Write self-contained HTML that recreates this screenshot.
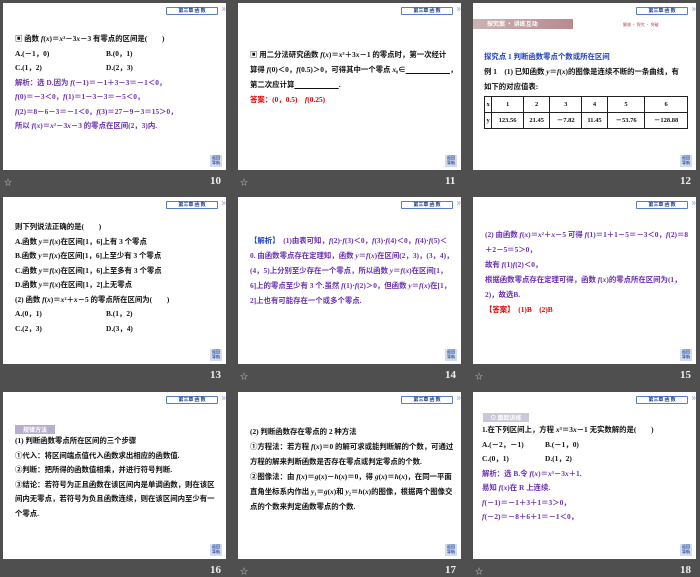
<!DOCTYPE html>
<html><head><meta charset="utf-8"><style>
*{margin:0;padding:0;box-sizing:border-box}
body{width:700px;height:577px;background:#4f4f4f;position:relative;overflow:hidden;font-family:"Liberation Serif","Noto Serif CJK SC","Noto Sans CJK SC",serif}
.s{position:absolute;width:223px;height:167px;background:#fff;overflow:hidden}
.tag{position:absolute;left:163px;top:4px;width:52px;height:8px;border:1px solid #5a7fc0;border-radius:1px;font-size:5px;line-height:6px;color:#1b3a8c;text-align:center;font-weight:bold;font-family:"Noto Sans CJK SC",sans-serif}
.tag:after{content:"»";position:absolute;right:-9px;top:-3px;font-size:10px;color:#8aa2d6;font-weight:normal}
.nav{position:absolute;left:207px;top:152px;width:12px;height:12px;background:#d3dcec;font-size:4px;line-height:5px;color:#2a4ea0;text-align:center;padding-top:1px;font-family:"Noto Sans CJK SC",sans-serif;font-weight:bold}
.c{position:absolute;left:12px;top:31px;right:10px;font-size:7.4px;line-height:14.5px;font-weight:bold;color:#111;font-family:"Liberation Serif","Noto Sans CJK SC",serif;white-space:nowrap}
.p{color:#6b2fb0}
.r{color:#e00000}
.b{color:#2040c0}
.cap{position:absolute;color:#eee;font-size:11px;font-weight:bold;font-family:"Liberation Serif",serif}
.st{position:absolute;color:#ccc;font-size:8px}
.two span{display:inline-block;width:91px}
table{border-collapse:collapse;font-size:6.5px;margin-top:2px;width:204px}
td{border:1px solid #222;text-align:center;height:12px}
</style></head><body>

<!-- slide 10 -->
<div class="s" style="left:3px;top:3px">
<div class="tag">第三章 函 数</div>
<div class="c" style="top:29px">▣ 函数 <i>f</i>(<i>x</i>)＝<i>x</i>²－3<i>x</i>－3 有零点的区间是(　　)<br>
<div class="two"><span>A.(－1，0)</span><span>B.(0，1)</span></div>
<div class="two"><span>C.(1，2)</span><span>D.(2，3)</span></div>
<div class="p">解析：选 D.因为 <i>f</i>(－1)＝－1＋3－3＝－1＜0，<br><i>f</i>(0)＝－3＜0，<i>f</i>(1)＝1－3－3＝－5＜0，<br><i>f</i>(2)＝8－6－3＝－1＜0，<i>f</i>(3)＝27－9－3＝15＞0，<br>所以 <i>f</i>(<i>x</i>)＝<i>x</i>²－3<i>x</i>－3 的零点在区间(2，3)内.</div></div>
<div class="nav">返回<br>导航</div></div>
<div class="st" style="left:4px;top:177px">☆</div><div class="cap" style="left:210px;top:175px">10</div>

<!-- slide 11 -->
<div class="s" style="left:238px;top:3px">
<div class="tag">第三章 函 数</div>
<div class="c" style="top:44px;line-height:15px">▣ 用二分法研究函数 <i>f</i>(<i>x</i>)＝<i>x</i>³＋3<i>x</i>－1 的零点时，第一次经计<br>算得 <i>f</i>(0)＜0，<i>f</i>(0.5)＞0，可得其中一个零点 <i>x</i>₀∈<u>　　　　　　</u>，<br>第二次应计算<u>　　　　　　</u>.<br><span class="r">答案：(0，0.5)　<i>f</i>(0.25)</span></div>
<div class="nav">返回<br>导航</div></div>
<div class="st" style="left:240px;top:177px">☆</div><div class="cap" style="left:445px;top:175px">11</div>

<!-- slide 12 -->
<div class="s" style="left:473px;top:3px">
<div class="tag">第三章 函 数</div>
<div style="position:absolute;left:0;top:16px;width:100px;height:10px;background:linear-gradient(90deg,#c9b3b5,#b88a90);color:#fff;font-size:6px;line-height:10px;padding-left:14px;font-weight:bold;font-family:'Noto Sans CJK SC',sans-serif">探究案 · 讲练互动</div>
<div style="position:absolute;left:150px;top:19px;font-size:4px;color:#b04050;font-family:'Noto Sans CJK SC',sans-serif">解惑 · 探究 · 突破</div>
<div class="c" style="top:46px;line-height:15px;left:11px"><span class="b">探究点 1 判断函数零点个数或所在区间</span><br>例 1　(1) 已知函数 <i>y</i>＝<i>f</i>(<i>x</i>)的图像是连续不断的一条曲线，有<br>如下的对应值表:
<table><tr><td>x</td><td>1</td><td>2</td><td>3</td><td>4</td><td>5</td><td>6</td></tr><tr><td>y</td><td>123.56</td><td>21.45</td><td>－7.82</td><td>11.45</td><td>－53.76</td><td>－128.88</td></tr></table></div>
<div class="nav">返回<br>导航</div></div>
<div class="cap" style="left:680px;top:175px">12</div>

<!-- slide 13 -->
<div class="s" style="left:3px;top:197px">
<div class="tag">第三章 函 数</div>
<div class="c" style="top:23px">则下列说法正确的是(　　)<br>A.函数 <i>y</i>＝<i>f</i>(<i>x</i>)在区间[1，6]上有 3 个零点<br>B.函数 <i>y</i>＝<i>f</i>(<i>x</i>)在区间[1，6]上至少有 3 个零点<br>C.函数 <i>y</i>＝<i>f</i>(<i>x</i>)在区间[1，6]上至多有 3 个零点<br>D.函数 <i>y</i>＝<i>f</i>(<i>x</i>)在区间[1，2]上无零点<br>(2) 函数 <i>f</i>(<i>x</i>)＝<i>x</i>²＋<i>x</i>－5 的零点所在区间为(　　)
<div class="two"><span>A.(0，1)</span><span>B.(1，2)</span></div>
<div class="two"><span>C.(2，3)</span><span>D.(3，4)</span></div></div>
<div class="nav">返回<br>导航</div></div>
<div class="cap" style="left:210px;top:369px">13</div>

<!-- slide 14 -->
<div class="s" style="left:238px;top:197px">
<div class="tag">第三章 函 数</div>
<div class="c p" style="top:36px;line-height:15px"><span class="b">【解析】</span>　(1)由表可知，<i>f</i>(2)·<i>f</i>(3)＜0，<i>f</i>(3)·<i>f</i>(4)＜0，<i>f</i>(4)·<i>f</i>(5)＜<br>0. 由函数零点存在定理知，函数 <i>y</i>＝<i>f</i>(<i>x</i>)在区间(2，3)，(3，4)，<br>(4，5)上分别至少存在一个零点，所以函数 <i>y</i>＝<i>f</i>(<i>x</i>)在区间[1，<br>6]上的零点至少有 3 个.虽然 <i>f</i>(1)·<i>f</i>(2)＞0，但函数 <i>y</i>＝<i>f</i>(<i>x</i>)在[1，<br>2]上也有可能存在一个或多个零点.</div>
<div class="nav">返回<br>导航</div></div>
<div class="st" style="left:240px;top:371px">☆</div><div class="cap" style="left:445px;top:369px">14</div>

<!-- slide 15 -->
<div class="s" style="left:473px;top:197px">
<div class="tag">第三章 函 数</div>
<div class="c p" style="top:30px;line-height:15px">(2) 由函数 <i>f</i>(<i>x</i>)＝<i>x</i>²＋<i>x</i>－5 可得 <i>f</i>(1)＝1＋1－5＝－3＜0，<i>f</i>(2)＝8<br>＋2－5＝5＞0，<br>故有 <i>f</i>(1)<i>f</i>(2)＜0，<br>根据函数零点存在定理可得，函数 <i>f</i>(<i>x</i>)的零点所在区间为(1，<br>2)，故选B.<br><span class="r">【答案】　(1)B　(2)B</span></div>
<div class="nav">返回<br>导航</div></div>
<div class="st" style="left:475px;top:371px">☆</div><div class="cap" style="left:680px;top:369px">15</div>

<!-- slide 16 -->
<div class="s" style="left:3px;top:392px">
<div class="tag">第三章 函 数</div>
<div style="position:absolute;left:12px;top:33px;width:40px;height:9px;background:#b8aed0;color:#fff;font-size:6px;line-height:9px;text-align:center;font-family:'Noto Sans CJK SC',sans-serif;font-weight:bold">规律方法</div>
<div class="c" style="top:42px;line-height:14.5px">(1) 判断函数零点所在区间的三个步骤<br>①代入：将区间端点值代入函数求出相应的函数值.<br>②判断：把所得的函数值相乘，并进行符号判断.<br>③结论：若符号为正且函数在该区间内是单调函数，则在该区<br>间内无零点，若符号为负且函数连续，则在该区间内至少有一<br>个零点.</div>
<div class="nav">返回<br>导航</div></div>
<div class="cap" style="left:210px;top:564px">16</div>

<!-- slide 17 -->
<div class="s" style="left:238px;top:392px">
<div class="tag">第三章 函 数</div>
<div class="c" style="top:32px;line-height:15px">(2) 判断函数存在零点的 2 种方法<br>①方程法：若方程 <i>f</i>(<i>x</i>)＝0 的解可求或能判断解的个数，可通过<br>方程的解来判断函数是否存在零点或判定零点的个数.<br>②图像法：由 <i>f</i>(<i>x</i>)＝<i>g</i>(<i>x</i>)－<i>h</i>(<i>x</i>)＝0，得 <i>g</i>(<i>x</i>)＝<i>h</i>(<i>x</i>)，在同一平面<br>直角坐标系内作出 <i>y</i>₁＝<i>g</i>(<i>x</i>)和 <i>y</i>₂＝<i>h</i>(<i>x</i>)的图像，根据两个图像交<br>点的个数来判定函数零点的个数.</div>
<div class="nav">返回<br>导航</div></div>
<div class="st" style="left:240px;top:566px">☆</div><div class="cap" style="left:445px;top:564px">17</div>

<!-- slide 18 -->
<div class="s" style="left:473px;top:392px">
<div class="tag">第三章 函 数</div>
<div style="position:absolute;left:10px;top:21px;width:46px;height:9px;background:#c8c8d8;color:#fff;font-size:6px;line-height:9px;text-align:center;font-family:'Noto Sans CJK SC',sans-serif;font-weight:bold">⊙ 跟踪训练</div>
<div class="c" style="top:31px;left:9px;line-height:14.5px">1.在下列区间上，方程 <i>x</i>³＝3<i>x</i>－1 无实数解的是(　　)<br>
<div class="two"><span style="width:63px">A.(－2，－1)</span><span>B.(－1，0)</span></div>
<div class="two"><span style="width:63px">C.(0，1)</span><span>D.(1，2)</span></div>
<div class="p">解析：选 B.令 <i>f</i>(<i>x</i>)＝<i>x</i>³－3<i>x</i>＋1.<br>易知 <i>f</i>(<i>x</i>)在 R 上连续.<br><i>f</i>(－1)＝－1＋3＋1＝3＞0，<br><i>f</i>(－2)＝－8＋6＋1＝－1＜0，</div></div>
<div class="nav">返回<br>导航</div></div>
<div class="st" style="left:475px;top:566px">☆</div><div class="cap" style="left:680px;top:564px">18</div>

</body></html>
